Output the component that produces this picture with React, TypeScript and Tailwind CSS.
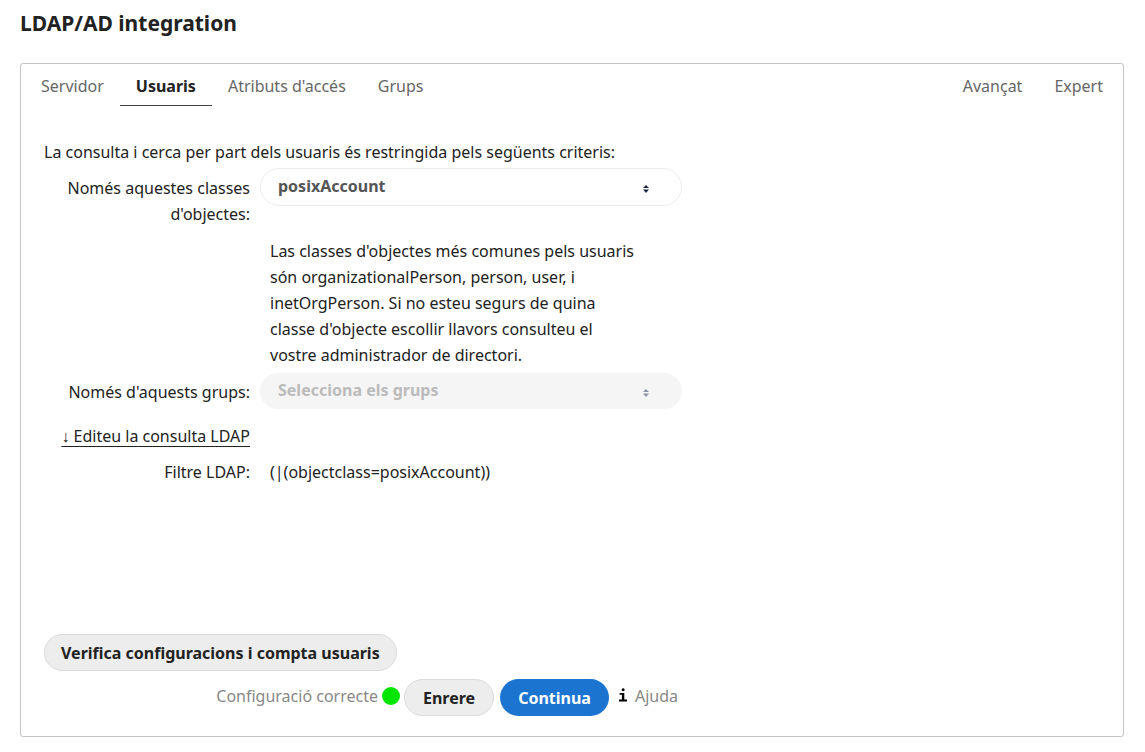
import { useState } from "react";

const mainTabs = ["Servidor", "Usuaris", "Atributs d'accés", "Grups"];
const extraTabs = ["Avançat", "Expert"];

function TabButton({ label, active, onSelect }: { label: string; active: boolean; onSelect: () => void }) {
  return (
    <button
      type="button"
      role="tab"
      aria-selected={active}
      onClick={onSelect}
      className={
        active
          ? "h-9 border-b border-[#444] px-4 pb-1 font-bold text-[#222]"
          : "h-9 border-b border-transparent px-4 pb-1 text-[#666]"
      }
    >
      {label}
    </button>
  );
}

function SortArrows({ className }: { className: string }) {
  return (
    <svg viewBox="0 0 8 10" aria-hidden="true" className={className}>
      <path d="M4 1 7 4H1Z M1 5.5H7L4 9Z" fill="currentColor" />
    </svg>
  );
}

export default function App() {
  const [tab, setTab] = useState("Usuaris");

  return (
    <main className="min-h-screen bg-white pt-2 pr-[21px] pb-4 pl-5 font-['Noto_Sans',sans-serif] text-[16px] leading-[26px] text-[#222]">
      <h2 className="text-[21px] leading-[30px] font-bold">LDAP/AD integration</h2>

      <section className="mt-[25px] flex min-h-[674px] flex-col rounded-[3px] border border-[#c4c4c4] pb-5">
        <div role="tablist" className="flex justify-between px-1 pt-[6px]">
          <div className="flex">
            {mainTabs.map((name) => (
              <TabButton key={name} label={name} active={tab === name} onSelect={() => setTab(name)} />
            ))}
          </div>
          <div className="flex">
            {extraTabs.map((name) => (
              <TabButton key={name} label={name} active={tab === name} onSelect={() => setTab(name)} />
            ))}
          </div>
        </div>

        <div className="flex max-w-[661px] grow flex-col pt-[33px] pl-[23px]">
          <p>La consulta i cerca per part dels usuaris és restringida pels següents criteris:</p>

          <div className="mt-[3px] grid grid-cols-[206px_1fr] gap-x-[10px]">
            <label htmlFor="object-classes" className="pt-[7px] text-right">
              Només aquestes classes d'objectes:
            </label>
            <div className="grid items-center">
              <select
                id="object-classes"
                className="col-start-1 row-start-1 h-[38px] w-full appearance-none self-start rounded-full border border-[#ededed] bg-white pr-12 pb-[3px] pl-[17px] font-bold text-[#555]"
              >
                <option>posixAccount</option>
              </select>
              <SortArrows className="pointer-events-none col-start-1 row-start-1 mt-4 mr-8 h-[10px] w-2 self-start justify-self-end text-[#1c2742]" />
            </div>

            <p className="col-start-2 mt-[11px] max-w-[390px] pl-[10px] leading-[26px]">
              Las classes d'objectes més comunes pels usuaris
              <br />
              són organizationalPerson, person, user, i
              <br />
              inetOrgPerson. Si no esteu segurs de quina
              <br />
              classe d'objecte escollir llavors consulteu el
              <br />
              vostre administrador de directori.
            </p>

            <label htmlFor="groups" className="mt-[5px] pt-[6px] text-right">
              Només d'aquests grups:
            </label>
            <div className="mt-[5px] grid items-center">
              <select
                id="groups"
                disabled
                className="col-start-1 row-start-1 h-9 w-full appearance-none rounded-full bg-[#f5f5f5] pr-12 pb-[2px] pl-[18px] font-bold text-[#bbb] opacity-100"
              >
                <option>Selecciona els grups</option>
              </select>
              <SortArrows className="pointer-events-none col-start-1 row-start-1 mt-1 mr-8 h-[10px] w-2 justify-self-end text-[#8d93a0]" />
            </div>

            <a href="#ldap-query" className="mt-[14px] justify-self-end underline underline-offset-4">
              ↓ Editeu la consulta LDAP
            </a>

            <span className="col-start-1 mt-[10px] text-right">Filtre LDAP:</span>
            <span className="mt-[10px] pl-[10px]">(|(objectclass=posixAccount))</span>
          </div>

          <div className="mt-auto">
            <button type="button" className="h-[37px] rounded-full border border-[#dbdbdb] bg-[#ededed] px-4 font-bold">
              Verifica configuracions i compta usuaris
            </button>
          </div>

          <div className="mt-2 flex items-center justify-end pr-1 text-[#888]">
            <span className="pb-1">Configuració correcte</span>
            <span className="mb-1 ml-1 size-[18px] rounded-full bg-[#00e600]" />
            <button type="button" className="ml-1 h-[37px] rounded-full border border-[#dbdbdb] bg-[#ededed] px-[18px] font-bold text-[#222]">
              Enrere
            </button>
            <button type="button" className="ml-[6px] h-[37px] rounded-full bg-[#1b75d0] px-[18px] font-bold text-white">
              Continua
            </button>
            <a href="#help" className="ml-[10px] flex items-center gap-2 pb-1">
              <svg viewBox="0 0 8 14" aria-hidden="true" className="mb-[2px] h-[14px] w-2">
                <path d="M4.2 0.2A1.5 1.5 0 1 1 4.1 0.2Z M0.6 5H5.3V11.6H8V13.4H0V11.6H2.9V6.8H0.6Z" fill="#000" />
              </svg>
              Ajuda
            </a>
          </div>
        </div>
      </section>
    </main>
  );
}
